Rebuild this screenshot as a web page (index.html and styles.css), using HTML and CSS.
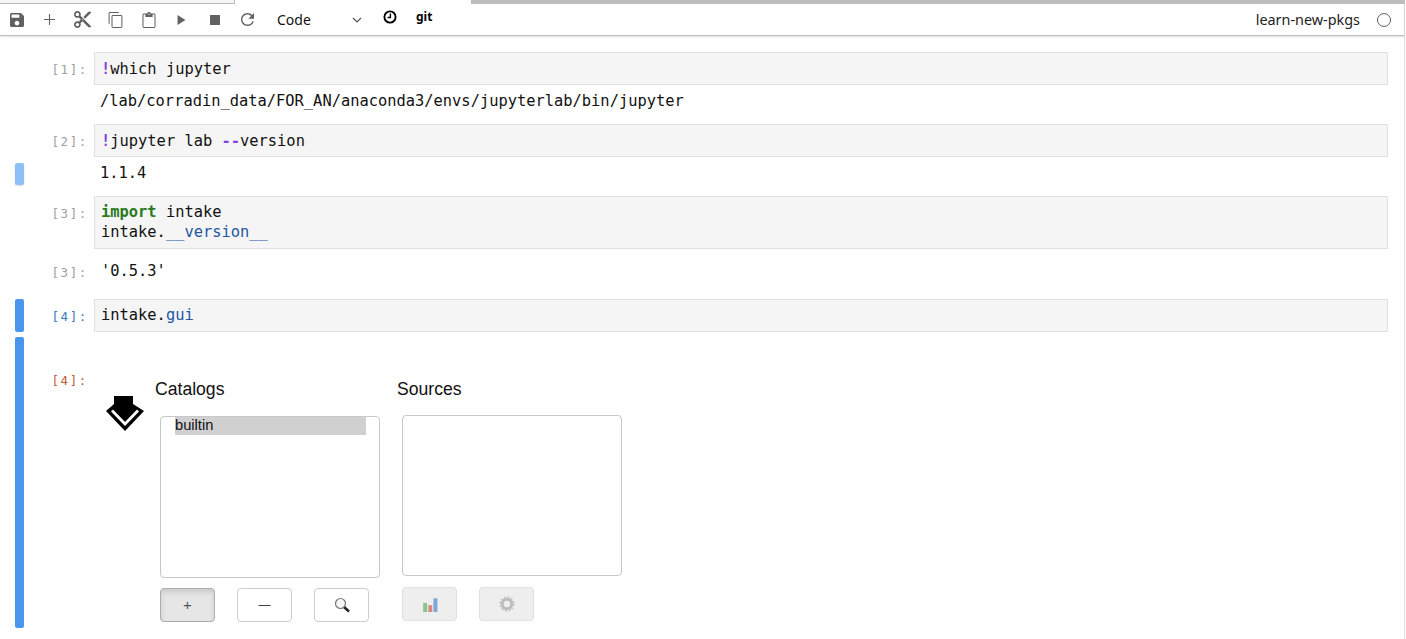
FILE: index.html
```html
<!DOCTYPE html>
<html lang="en">
<head>
<meta charset="utf-8">
<title>learn-new-pkgs</title>
<link rel="stylesheet" href="styles.css">
</head>
<body>
<div class="app">
  <div class="tabstrip">
    <div class="tab"></div>
    <div class="tab-gap"></div>
    <div class="tab-rest"></div>
  </div>
  <div class="toolbar">
    <span class="tool"><svg class="ic ic-save" viewBox="3 3 18 18"><path d="M17 3H5c-1.11 0-2 .9-2 2v14c0 1.1.89 2 2 2h14c1.1 0 2-.9 2-2V7l-4-4zm-5 16c-1.66 0-3-1.34-3-3s1.34-3 3-3 3 1.34 3 3-1.34 3-3 3zm3-10H5V5h10v4z"/></svg></span>
    <span class="tool"><svg class="ic ic-add" viewBox="5 5 14 14"><path d="M19 12.700h-6.300V19h-1.400v-6.300H5v-1.400h6.300V5h1.400v6.300H19v1.400z"/></svg></span>
    <span class="tool"><svg class="ic ic-cut" viewBox="2 2 20 20"><path d="M9.640 7.640c.23-.5.36-1.050.36-1.640 0-2.210-1.790-4-4-4S2 3.790 2 6s1.790 4 4 4c.59 0 1.140-.13 1.640-.36L10 12l-2.360 2.360C7.140 14.130 6.590 14 6 14c-2.210 0-4 1.790-4 4s1.790 4 4 4 4-1.790 4-4c0-.59-.13-1.140-.36-1.640L12 14l7 7h3v-1L9.640 7.640zM6 8c-1.100 0-2-.89-2-2s.9-2 2-2 2 .89 2 2-.9 2-2 2zm0 12c-1.100 0-2-.89-2-2s.9-2 2-2 2 .89 2 2-.9 2-2 2zm6-7.500c-.28 0-.5-.22-.5-.5s.22-.5.5-.5.5.22.5.5-.22.5-.5.5zM19 3l-6 6 2 2 7-7V3z"/></svg></span>
    <span class="tool"><svg class="ic ic-copy" viewBox="2 1 19 22"><path d="M16 1H4c-1.100 0-2 .9-2 2v14h1.400V2.400H16V1zm3 4H8c-1.100 0-2 .9-2 2v14c0 1.100.9 2 2 2h11c1.100 0 2-.9 2-2V7c0-1.100-.9-2-2-2zm.6 16.600H7.400V6.400h12.200v15.200z"/></svg></span>
    <span class="tool"><svg class="ic ic-paste" viewBox="3 0 18 22"><path d="M19 2h-4.180C14.400.84 13.300 0 12 0c-1.300 0-2.400.84-2.820 2H5c-1.100 0-2 .9-2 2v16c0 1.100.9 2 2 2h14c1.100 0 2-.9 2-2V4c0-1.100-.9-2-2-2zm-7 0c.55 0 1 .45 1 1s-.45 1-1 1-1-.45-1-1 .45-1 1-1zm7.600 18.600H4.400V3.400H7V7h10V3.400h2.600v17.200z"/></svg></span>
    <span class="tool"><svg class="ic ic-play" viewBox="8 5 11 14"><path d="M8 5v14l11-7z"/></svg></span>
    <span class="tool"><svg class="ic ic-stop" viewBox="6 6 12 12"><path d="M6 6h12v12H6z"/></svg></span>
    <span class="tool"><svg class="ic ic-refresh" viewBox="4 4 16 16"><path d="M17.650 6.350C16.200 4.900 14.210 4 12 4c-4.420 0-7.990 3.580-7.990 8s3.570 8 7.990 8c3.730 0 6.840-2.550 7.730-6h-1.700c-.82 2.330-3.320 4.300-6.030 4.300-3.470 0-6.300-2.830-6.300-6.300s2.830-6.300 6.300-6.300c1.740 0 3.290.72 4.420 1.880L13 11h7V4l-2.350 2.350z"/></svg></span>
    <span class="celltype">
      <span>Code</span>
      <svg class="chev" viewBox="0 0 10 6"><path d="M1 1l4 4 4-4" fill="none" stroke="#555" stroke-width="1.200"/></svg>
    </span>
    <span class="clock"><svg class="clock-ic" viewBox="0 0 14 14"><circle cx="7" cy="7" r="5.600" fill="none" stroke="#000" stroke-width="1.900"/><path d="M7.400 3.600v3.900H4.600" fill="none" stroke="#000" stroke-width="1.400"/></svg></span>
    <span class="git">git</span>
    <span class="spring"></span>
    <span class="kernel">learn-new-pkgs</span>
    <span class="status"></span>
  </div>

  <div class="notebook">
    <div class="row">
      <div class="collector"></div>
      <div class="prompt">[1]:</div>
      <div class="input"><span class="op">!</span>which jupyter</div>
    </div>
    <div class="row row-out">
      <div class="collector"></div>
      <div class="prompt"></div>
      <div class="output">/lab/corradin_data/FOR_AN/anaconda3/envs/jupyterlab/bin/jupyter</div>
    </div>

    <div class="row">
      <div class="collector"></div>
      <div class="prompt">[2]:</div>
      <div class="input"><span class="op">!</span>jupyter lab <span class="op">--</span>version</div>
    </div>
    <div class="row row-out">
      <div class="collector collector-soft"></div>
      <div class="prompt"></div>
      <div class="output">1.1.4</div>
    </div>

    <div class="row">
      <div class="collector"></div>
      <div class="prompt">[3]:</div>
      <div class="input input-high"><span class="kw">import</span> intake<br>intake.<span class="prop">__version__</span></div>
    </div>
    <div class="row row-out row-result">
      <div class="collector"></div>
      <div class="prompt">[3]:</div>
      <div class="output output-result">'0.5.3'</div>
    </div>

    <div class="row">
      <div class="collector collector-on"></div>
      <div class="prompt prompt-in">[4]:</div>
      <div class="input input-high">intake.<span class="prop">gui</span></div>
    </div>
    <div class="row row-widget">
      <div class="collector collector-on"></div>
      <div class="prompt prompt-out">[4]:</div>
      <div class="widget">
        <svg class="logo" viewBox="0 0 38 36">
          <path d="M8 0h19v8l11 7-19 20L0 15l8-7z" fill="#000"/>
          <path d="M6 14.500l13 13.500 13-13.500" fill="none" stroke="#fff" stroke-width="2.800"/>
        </svg>
        <div class="panel panel-cat">
          <div class="panel-title">Catalogs</div>
          <div class="listbox listbox-cat"><div class="option">builtin</div></div>
          <div class="btns">
            <span class="btn btn-active">+</span>
            <span class="btn btn-minus">&#8212;</span>
            <span class="btn"><svg class="btn-ic" viewBox="0 0 16 16"><circle cx="6.500" cy="6.500" r="5" fill="#f4f6f8" stroke="#777" stroke-width="1.200"/><path d="M10.300 10.300l4.700 4.200" stroke="#222" stroke-width="2.600"/></svg></span>
          </div>
        </div>
        <div class="panel panel-src">
          <div class="panel-title">Sources</div>
          <div class="listbox listbox-src"></div>
          <div class="btns btns-src">
            <span class="btn btn-off"><svg class="btn-ic btn-ic-dim" viewBox="0 0 14 14"><path d="M1 6h3.500v8H1z" fill="#6cb56c"/><path d="M5.500 8H9v6H5.500z" fill="#d0695f"/><path d="M10 2h3.500v12H10z" fill="#5b8fd0"/></svg></span>
            <span class="btn btn-off"><svg class="btn-ic" viewBox="0 0 16 16"><circle cx="8" cy="8" r="4.800" fill="none" stroke="#bcbcbc" stroke-width="3"/><circle cx="8" cy="8" r="6.800" fill="none" stroke="#c4c4c4" stroke-width="1.800" stroke-dasharray="1.800 1.800"/></svg></span>
          </div>
        </div>
      </div>
    </div>
  </div>
</div>
</body>
</html>
```

FILE: styles.css
```css
html, body {
  margin: 0;
  height: 100%;
  overflow: hidden;
  background: #fff;
}

.app {
  display: flex;
  flex-direction: column;
  height: 639px;
  width: 1405px;
  box-sizing: border-box;
  border-right: 1px solid #dcdcdc;
}

.tabstrip {
  display: flex;
  height: 4px;
  flex: none;
}

.tab {
  width: 235px;
  background: #f5f5f5;
  border-right: 1px solid #bdbdbd;
  border-bottom: 1px solid #bdbdbd;
  box-sizing: border-box;
  flex: none;
}

.tab-gap {
  width: 236px;
  flex: none;
}

.tab-rest {
  flex: 1;
  background: #bdbdbd;
  margin-right: -1px;
}

.toolbar {
  display: flex;
  align-items: center;
  height: 32px;
  flex: none;
  box-sizing: border-box;
  border-bottom: 1px solid #bdbdbd;
  box-shadow: 0 1px 2px rgba(0, 0, 0, 0.12);
  font-family: "Noto Sans", sans-serif;
  font-size: 13px;
  color: #222;
}

.tool {
  width: 33px;
  flex: none;
  display: flex;
  justify-content: center;
  align-items: center;
}

.ic {
  display: block;
  fill: #616161;
}

.ic-save { width: 14px; height: 14px; }
.ic-add { width: 11px; height: 11px; }
.ic-cut { width: 17px; height: 17px; }
.ic-copy { width: 15px; height: 16px; }
.ic-paste { width: 14px; height: 16px; }
.ic-play { width: 9px; height: 10px; }
.ic-stop { width: 10px; height: 10px; }
.ic-refresh { width: 13px; height: 13px; }

.celltype {
  display: flex;
  align-items: center;
  justify-content: space-between;
  width: 85px;
  margin-left: 13px;
  font-size: 14px;
  color: #111;
  flex: none;
}

.chev {
  width: 10px;
  height: 6px;
}

.clock {
  margin-left: 21px;
  margin-top: -5px;
  display: flex;
}

.clock-ic {
  width: 14px;
  height: 14px;
}

.git {
  margin-left: 19px;
  margin-top: -7px;
  font-weight: 700;
  font-size: 12px;
  color: #000;
}

.spring {
  flex: 1;
}

.kernel {
  font-size: 14.400px;
  color: #222;
  margin-right: 1px;
}

.status {
  width: 14px;
  height: 14px;
  box-sizing: border-box;
  border: 1.500px solid #616161;
  border-radius: 50%;
  margin-left: 16px;
  margin-right: 13px;
}

.notebook {
  flex: 1;
  padding: 16px 16px 0 15px;
  min-height: 0;
}

.row {
  display: grid;
  grid-template-columns: 9px 70px 1fr;
  font-family: "DejaVu Sans Mono", monospace;
  font-size: 15.400px;
  line-height: 20px;
  color: #111;
}

.row-out {
  margin-top: 6px;
  margin-bottom: 11px;
}

.row-result {
  margin-bottom: 16px;
}

.row-widget {
  margin-top: 5px;
  margin-bottom: 0;
  height: 291px;
}

.collector {
  border-radius: 2px;
}

.collector-soft {
  height: 22px;
  background: #8dc0f5;
  box-shadow: 0 1px 2px rgba(0, 0, 0, 0.15);
}

.collector-on {
  background: #4a96ee;
}

.prompt {
  font-size: 12.500px;
  letter-spacing: 1.600px;
  text-align: right;
  padding: 8px 6px 0 0;
  color: #a0a0a0;
}

.prompt-in {
  color: #3f7cb8;
}

.prompt-out {
  color: #bf5b3d;
  padding-top: 34px;
}

.input {
  background: #f5f5f5;
  border: 1px solid #e0e0e0;
  padding: 6px 6px 5px 6px;
}

.input-high {
  padding: 5px 6px 6px 6px;
}

.output {
  min-height: 22px;
  padding-left: 6px;
}

.output-result {
  padding-top: 6px;
  padding-left: 7px;
}

.op {
  color: #8a3fe0;
  font-weight: 700;
}

.kw {
  color: #2a7a1e;
  font-weight: 700;
}

.prop {
  color: #2255a4;
}

.widget {
  display: flex;
  font-family: "Liberation Sans", Arial, sans-serif;
  color: #111;
}

.logo {
  width: 38px;
  height: 36px;
  flex: none;
  margin: 59px 0 0 12px;
}

.panel {
  flex: none;
}

.panel-cat {
  width: 230px;
  margin-left: 11px;
}

.panel-src {
  width: 230px;
  margin-left: 12px;
}

.panel-title {
  font-size: 17.600px;
  line-height: 20px;
  margin-top: 42px;
}

.listbox {
  width: 220px;
  box-sizing: border-box;
  margin-left: 5px;
  background: #fff;
  border: 1px solid #c8c8c8;
  border-radius: 4px;
  padding: 0 13px 0 14px;
}

.listbox-cat {
  height: 162px;
  margin-top: 17px;
}

.listbox-src {
  height: 161px;
  margin-top: 16px;
}

.option {
  font-size: 14.700px;
  line-height: 17px;
  padding-bottom: 1px;
  background: #d0d0d0;
}

.btns {
  display: flex;
  gap: 22px;
  margin: 10px 0 0 5px;
}

.btns-src {
  margin-top: 11px;
}

.btn {
  width: 55px;
  height: 34px;
  box-sizing: border-box;
  display: flex;
  justify-content: center;
  align-items: center;
  background: #fff;
  border: 1px solid #ccc;
  border-radius: 4px;
  font-size: 15px;
  color: #555;
}

.btn-minus {
  font-size: 12px;
  color: #444;
}

.btn-active {
  background: #e6e6e6;
  border-color: #adadad;
  box-shadow: inset 0 3px 5px rgba(0, 0, 0, 0.125);
}

.btn-off {
  background: #eee;
  border-color: #e0e0e0;
}

.btn-ic {
  width: 16px;
  height: 16px;
}

.btn-ic-dim {
  opacity: 0.75;
}
```
